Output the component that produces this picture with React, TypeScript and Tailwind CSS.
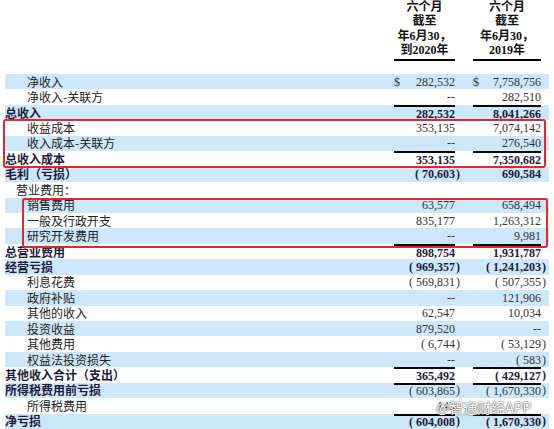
import React from "react";

type Row = {
    label: string;
    level: 0 | 1 | 2;
    a?: string;
    b?: string;
    dollar?: boolean;
    line?: boolean;
    numBold?: boolean;
};

// level 0 = bold total row, 1 = section heading, 2 = line item
const ROWS: Row[] = [
    { label: "净收入", level: 2, a: "282,532", b: "7,758,756", dollar: true },
    { label: "净收入-关联方", level: 2, a: "--", b: "282,510" },
    { label: "总收入", level: 0, a: "282,532", b: "8,041,266", line: true, numBold: true },
    { label: "收益成本", level: 2, a: "353,135", b: "7,074,142" },
    { label: "收入成本-关联方", level: 2, a: "--", b: "276,540" },
    { label: "总收入成本", level: 0, a: "353,135", b: "7,350,682", line: true, numBold: true },
    { label: "毛利（亏损）", level: 0, a: "(70,603)", b: "690,584", numBold: true },
    { label: "营业费用：", level: 1 },
    { label: "销售费用", level: 2, a: "63,577", b: "658,494" },
    { label: "一般及行政开支", level: 2, a: "835,177", b: "1,263,312" },
    { label: "研究开发费用", level: 2, a: "--", b: "9,981" },
    { label: "总营业费用", level: 0, a: "898,754", b: "1,931,787", line: true, numBold: true },
    { label: "经营亏损", level: 0, a: "(969,357)", b: "(1,241,203)", numBold: true },
    { label: "利息花费", level: 2, a: "(569,831)", b: "(507,355)" },
    { label: "政府补贴", level: 2, a: "--", b: "121,906" },
    { label: "其他的收入", level: 2, a: "62,547", b: "10,034" },
    { label: "投资收益", level: 2, a: "879,520", b: "--" },
    { label: "其他费用", level: 2, a: "(6,744)", b: "(53,129)" },
    { label: "权益法投资损失", level: 2, a: "--", b: "(583)" },
    { label: "其他收入合计（支出）", level: 0, a: "365,492", b: "(429,127)", line: true, numBold: true },
    { label: "所得税费用前亏损", level: 0, a: "(603,865)", b: "(1,670,330)", line: true },
    { label: "所得税费用", level: 2, a: "143", b: "" },
    { label: "净亏损", level: 0, a: "(604,008)", b: "(1,670,330)", line: true, numBold: true },
];

function Num({ v, dollar, line, wide }: { v?: string; dollar?: boolean; line?: boolean; wide?: boolean }) {
    const val = v ?? "";
    const neg = val.startsWith("(");
    const digits = neg ? val.slice(1, -1) : val;
    return (
        <div className={`flex h-full shrink-0 ${wide ? "w-[76px]" : "w-[69px]"}`}>
            <div className={`flex flex-1 items-center justify-between ${line ? "border-t-2 border-black" : ""}`}>
                <span>{dollar ? "$" : ""}</span>
                <span>
                    {neg && <span className="mr-[3px]">(</span>}
                    {digits}
                </span>
            </div>
            <div className="flex w-[8px] items-center pl-[1px]">{neg ? ")" : ""}</div>
        </div>
    );
}

function HeaderCol({ lines, wide }: { lines: string[]; wide?: boolean }) {
    return (
        <div className={`flex shrink-0 ${wide ? "w-[76px]" : "w-[69px]"}`}>
            <div className="flex flex-1 flex-col items-center border-b-2 border-black pb-[1px] text-[12px] font-bold leading-[14.4px] text-[#111]">
                {lines.map((l, i) => (
                    <span key={i}>{l}</span>
                ))}
            </div>
            <div className="w-[8px]" />
        </div>
    );
}

export default function App() {
    return (
        <div className="relative h-[429px] w-[554px] overflow-hidden bg-white font-['Liberation_Serif','Noto_Sans_CJK_SC',serif]">
            {/* ── Column headers ── */}
            <div className="mx-[5px] flex h-[74px] items-start">
                <div className="flex-1" />
                <HeaderCol lines={["六个月", "截至", "年6月30，", "到2020年"]} />
                <div className="w-[10px] shrink-0" />
                <HeaderCol lines={["六个月", "截至", "年6月30，", "2019年"]} wide />
            </div>

            {/* ── Rows ── */}
            <div className="flex flex-col">
                {ROWS.map((r, i) => (
                    <div
                        key={i}
                        className={`mx-[5px] flex h-[15.45px] text-[12px] leading-none ${i % 2 === 0 ? "bg-[#cce8fa]" : "bg-white"}`}
                    >
                        <div
                            className={`flex flex-1 items-center font-['Noto_Sans_CJK_SC',sans-serif] ${
                                r.level === 0
                                    ? "font-bold text-[#1e1a3c]"
                                    : r.level === 1
                                    ? "pl-[11px] text-[#222]"
                                    : "pl-[22px] text-[#222]"
                            }`}
                        >
                            {r.label}
                        </div>
                        <div className={`flex ${r.numBold ? "font-bold text-[#1e1a3c]" : "text-[#333]"}`}>
                            <Num v={r.a} dollar={r.dollar} line={r.line} />
                            <div className="w-[10px] shrink-0" />
                            <Num v={r.b} dollar={r.dollar} line={r.line} wide />
                        </div>
                    </div>
                ))}
            </div>

            {/* ── Red annotation boxes ── */}
            <div className="absolute left-[3px] top-[119px] h-[49px] w-[543px] rounded-[3px] border-2 border-[#e3262b]" />
            <div className="absolute left-[22px] top-[198px] h-[50px] w-[526px] rounded-[3px] border-2 border-[#e3262b]" />

            {/* ── Watermark ── */}
            <div className="absolute left-[436px] top-[397px] font-['Noto_Sans_CJK_SC',sans-serif] text-[14px] text-white [text-shadow:0_0_1px_#444,0_0_2px_#666]">
                @智通财经APP
            </div>
        </div>
    );
}
